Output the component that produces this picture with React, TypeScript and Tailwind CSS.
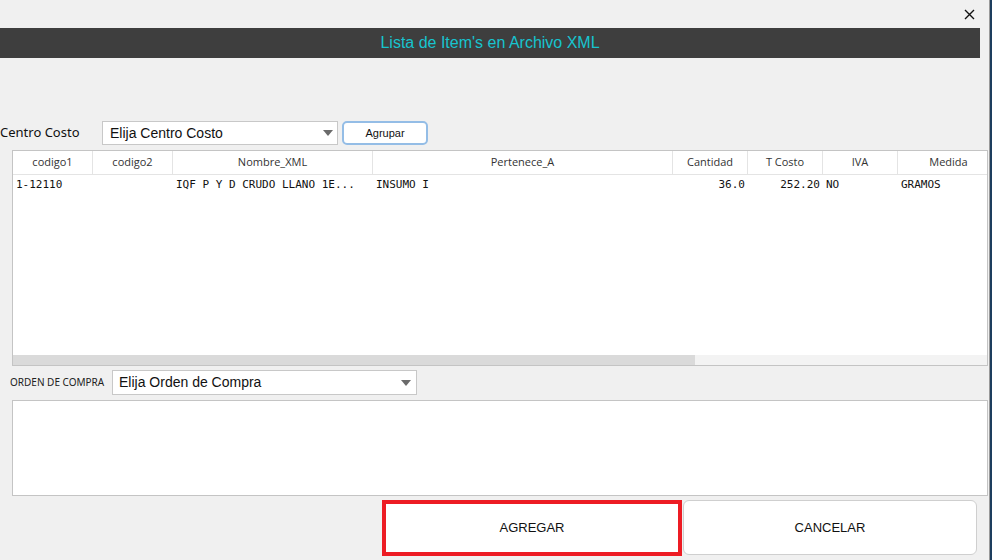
import React from "react";

const cols = [
  { label: "codigo1", w: 80 },
  { label: "codigo2", w: 80 },
  { label: "Nombre_XML", w: 200 },
  { label: "Pertenece_A", w: 300 },
  { label: "Cantidad", w: 75 },
  { label: "T Costo", w: 75 },
  { label: "IVA", w: 75 },
  { label: "Medida", w: 102 },
];

const row = [
  { t: "1-12110", a: "left" },
  { t: "", a: "left" },
  { t: "IQF P Y D CRUDO LLANO 1E...", a: "left" },
  { t: "INSUMO I", a: "left" },
  { t: "36.0", a: "right" },
  { t: "252.20", a: "right" },
  { t: "NO", a: "left" },
  { t: "GRAMOS", a: "left" },
];

function Caret() {
  return (
    <svg width="10" height="6" viewBox="0 0 10 6" className="shrink-0">
      <path d="M0 0 L10 0 L5 6 Z" fill="#6b6b6b" />
    </svg>
  );
}

export default function App() {
  return (
    <div
      className="w-[992px] h-[560px] bg-[#f0f0f0] flex overflow-hidden"
      style={{ fontFamily: "'Liberation Sans', Arial, sans-serif" }}
    >
      <div className="w-[989px] flex flex-col">
        {/* close row */}
        <div className="h-[28px] flex justify-end items-center pr-[14px]">
          <svg width="11" height="11" viewBox="0 0 11 11">
            <path d="M1 1 L10 10 M10 1 L1 10" stroke="#111" strokeWidth="1.4" />
          </svg>
        </div>
        {/* title bar */}
        <div className="h-[30px] w-[980px] bg-[#3e3e3e] flex items-center justify-center">
          <span
            className="text-[#17c4cf] text-[16px]"
            style={{ fontFamily: "'Liberation Sans Narrow', 'Liberation Sans', Arial, sans-serif" }}
          >
            Lista de Item's en Archivo XML
          </span>
        </div>

        {/* centro costo row */}
        <div className="mt-[63px] h-[24px] flex items-center">
          <span className="w-[102px] text-[13px] text-[#111]" style={{ fontFamily: "'Noto Sans', 'Liberation Sans', sans-serif" }}>
            Centro Costo
          </span>
          <div className="w-[236px] h-[24px] bg-white border border-[#c8c8c8] flex items-center justify-between pl-[7px] pr-[4px]">
            <span className="text-[14px] text-[#111]">Elija Centro Costo</span>
            <Caret />
          </div>
          <div className="ml-[4px] w-[86px] h-[24px] bg-white border-2 border-[#94bde6] rounded-[5px] flex items-center justify-center text-[11px] text-[#111]">
            Agrupar
          </div>
        </div>

        {/* table */}
        <div className="mt-[5px] ml-[12px] w-[976px] h-[216px] bg-white border border-[#c4c4c4] flex flex-col overflow-hidden">
          <div className="flex h-[24px] border-b border-[#e4e4e4] shrink-0">
            {cols.map((c, i) => (
              <div
                key={i}
                className="shrink-0 flex items-center justify-center text-[11px] text-[#333] border-r border-[#e4e4e4]"
                style={{ width: c.w, fontFamily: "'Open Sans', 'Noto Sans', sans-serif" }}
              >
                {c.label}
              </div>
            ))}
          </div>
          <div className="flex h-[21px] shrink-0">
            {row.map((c, i) => (
              <div
                key={i}
                className={
                  "shrink-0 flex items-center text-[11px] text-[#111] px-[3px] " +
                  (c.a === "right" ? "justify-end" : "justify-start")
                }
                style={{ width: cols[i].w, fontFamily: "'DejaVu Sans Mono', 'Liberation Mono', monospace" }}
              >
                {c.t}
              </div>
            ))}
          </div>
          <div className="flex-1" />
          <div className="h-[10px] bg-[#f3f3f3] flex shrink-0">
            <div className="w-[682px] bg-[#dadada]" />
          </div>
        </div>

        {/* orden de compra row */}
        <div className="mt-[4px] h-[25px] flex items-center">
          <span className="w-[112px] pl-[10px] text-[10px] text-[#222]" style={{ fontFamily: "'Noto Sans', 'Liberation Sans', sans-serif" }}>
            ORDEN DE COMPRA
          </span>
          <div className="w-[305px] h-[25px] bg-white border border-[#c8c8c8] flex items-center justify-between pl-[6px] pr-[5px]">
            <span className="text-[14px] text-[#111]">Elija Orden de Compra</span>
            <Caret />
          </div>
        </div>

        {/* text area */}
        <div className="mt-[5px] ml-[12px] w-[976px] h-[96px] bg-white border border-[#c4c4c4]" />

        {/* buttons */}
        <div className="mt-[4px] flex h-[56px]">
          <div className="ml-[382px] w-[300px] h-[56px] bg-white border-4 border-[#ed1c24] flex items-center justify-center text-[13px] text-[#111]">
            AGREGAR
          </div>
          <div className="ml-[1px] w-[294px] h-[55px] bg-white border border-[#cfcfcf] rounded-[6px] flex items-center justify-center text-[13px] text-[#111]">
            CANCELAR
          </div>
        </div>
      </div>
      <div className="w-[1px] bg-[#9a9a9a]" />
      <div className="w-[2px] bg-[#1d3d5e]" />
    </div>
  );
}
